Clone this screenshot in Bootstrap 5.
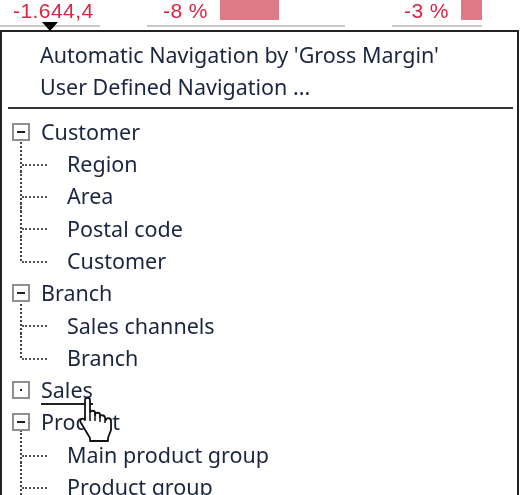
<!DOCTYPE html>
<html><head><meta charset="utf-8">
<link href="https://cdn.jsdelivr.net/npm/bootstrap@5.3.0/dist/css/bootstrap.min.css" rel="stylesheet">
<style>
html,body{margin:0;height:495px;overflow:hidden;background:#fff}
body{font-family:"Noto Sans","Open Sans",sans-serif;font-size:21.5px;color:#1a2540}
.shot{width:524px;height:495px;overflow:hidden;filter:blur(.4px)}
.topstrip{height:30px;position:relative}
.kpi{height:27px;border-bottom:2px solid #c9c9c9;color:#dc2445;font-family:"Liberation Sans",sans-serif;font-size:21px;letter-spacing:.45px;line-height:21px;align-items:flex-start;white-space:nowrap}
.kpi-a{width:100px;padding-left:13px}
.kpi-b{width:198px;margin-left:47px;padding-left:16px}
.kpi-c{width:90px;margin-left:47px;padding-left:12px}
.kbar{display:inline-block;height:20px;background:#dc7a86;margin-left:12px}
.bar-b{width:59px}.bar-c{width:21px}
.caret-mark{position:absolute;left:42px;top:22px;width:0;height:0;border-left:8px solid transparent;border-right:8px solid transparent;border-top:9px solid #000}
.menu-box{border:2px solid #222;border-bottom:0;width:519px;height:470px;padding-top:7px}
.cmd{height:32.3px;line-height:32px;padding-left:38px;white-space:nowrap}
.sep{height:2px;background:#333;margin:3px 4px 7px 6px}
.trow{height:32.3px;line-height:32px;display:flex;align-items:center;white-space:nowrap}
.tbox{width:18px;height:18px;border:2px solid #8f8f8f;margin:0 11px 0 10px;flex:none;position:relative;background:#fff;z-index:1}
.tbox.minus::after{content:"";position:absolute;left:3px;right:3px;top:6px;height:2px;background:#222}
.tbox.dotc::after{content:"";position:absolute;left:6px;top:6px;width:2px;height:2px;background:#222}
.tchild{position:relative;padding-left:65px;width:100%;height:32.3px}
.tchild::before{content:"";position:absolute;left:18px;top:-9px;height:41.3px;border-left:2px dotted #444}
.tchild::after{content:"";position:absolute;left:20px;top:16px;width:25px;border-top:2px dotted #555}
.tchild.tail::before{height:25px}
.hover-u{border-bottom:2px solid #222;line-height:24px;height:27px;display:block;margin-top:2px}
.cursor-h{position:absolute;left:79px;top:397px}
</style></head>
<body><div class="shot position-relative">
<div class="topstrip d-flex">
<div class="kpi kpi-a d-flex">-1.644,4</div>
<div class="kpi kpi-b d-flex">-8 %<span class="kbar bar-b"></span></div>
<div class="kpi kpi-c d-flex">-3 %<span class="kbar bar-c"></span></div>
<span class="caret-mark"></span>
</div>
<div class="menu-box">
<div class="cmd">Automatic Navigation by 'Gross Margin'</div>
<div class="cmd">User Defined Navigation ...</div>
<div class="sep"></div>
<div class="trow"><span class="tbox minus"></span>Customer</div>
<div class="trow tchild">Region</div>
<div class="trow tchild">Area</div>
<div class="trow tchild">Postal code</div>
<div class="trow tchild tail">Customer</div>
<div class="trow"><span class="tbox minus"></span>Branch</div>
<div class="trow tchild">Sales channels</div>
<div class="trow tchild tail">Branch</div>
<div class="trow"><span class="tbox dotc"></span><span class="hover-u">Sales</span></div>
<div class="trow"><span class="tbox minus"></span>Product</div>
<div class="trow tchild">Main product group</div>
<div class="trow tchild">Product group</div>
</div>
<svg class="cursor-h" width="34" height="46" viewBox="0 0 34 46"><path d="M6 3c0-3 5-3 5 0v13c0-3 5-3 5 0v2c0-3 5-3 5 0v2c0-3 5-2 5 1l1 2c1-3 5-2 5 1v9l-3 8v3H11v-3L2 26c-2-3 1-6 4-3z" fill="#fff" stroke="#111" stroke-width="1.8" stroke-linejoin="round"/><path d="M11 17v7M16 17v7M21 20v5M26 22v4" stroke="#111" stroke-width="1.5"/></svg>
</div></body></html>
